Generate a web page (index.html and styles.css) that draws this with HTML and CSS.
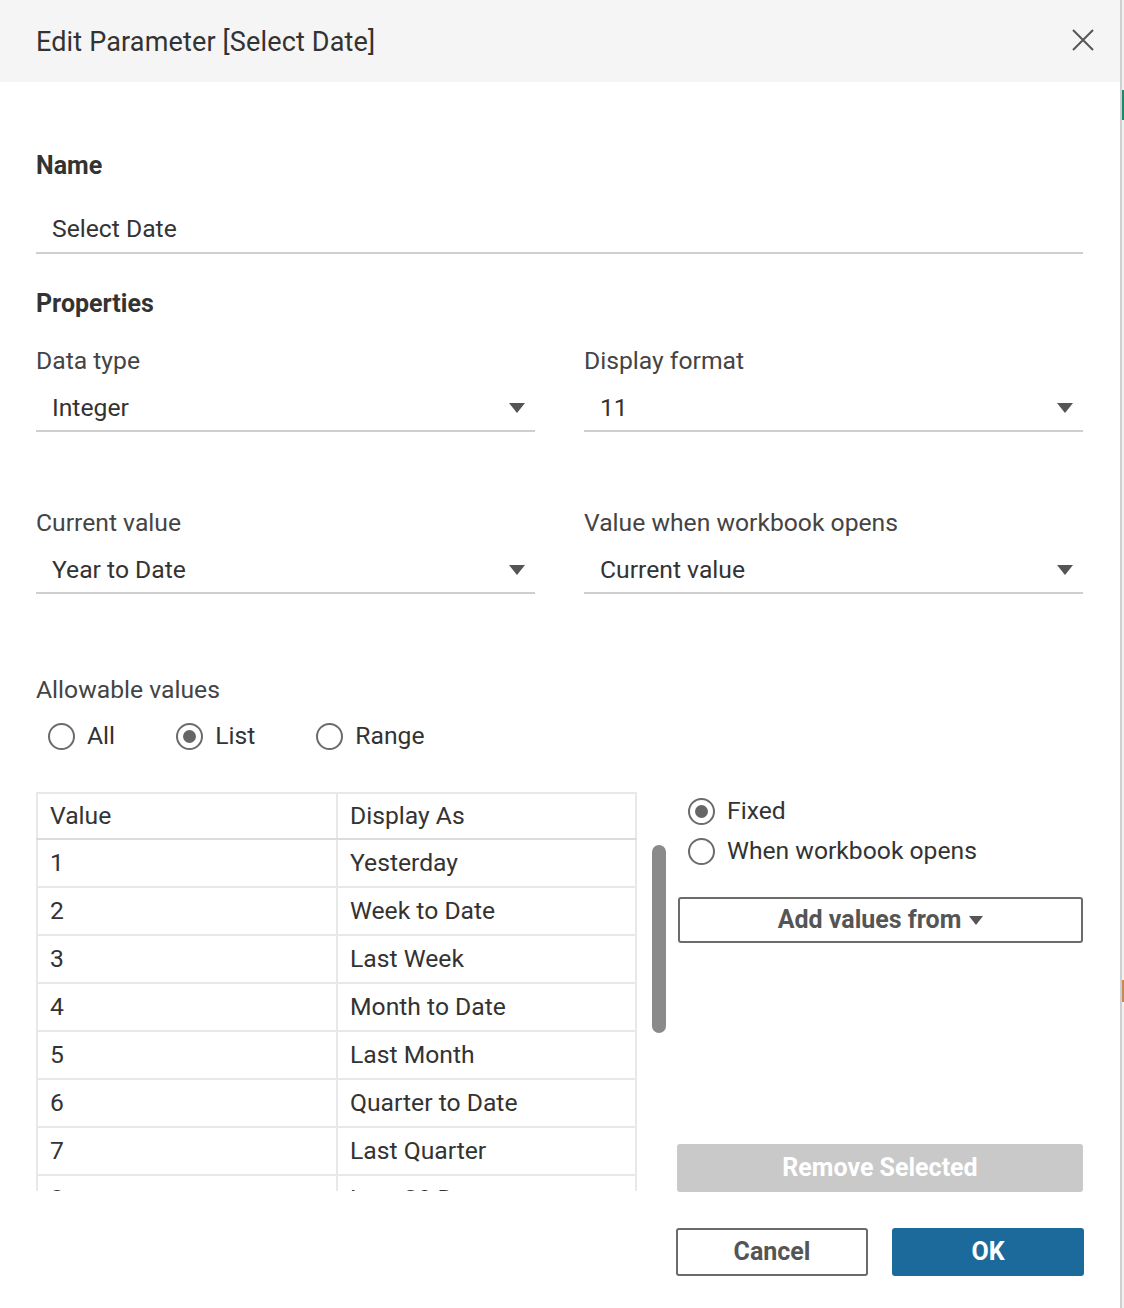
FILE: index.html
```html
<!DOCTYPE html>
<html>
<head>
<meta charset="utf-8">
<title>Edit Parameter</title>
<link rel="stylesheet" href="styles.css">
</head>
<body>
<div class="page">
  <div class="dialog">
    <div class="header">
      <div class="title">Edit Parameter [Select Date]</div>
      <svg class="close" width="22" height="22" viewBox="0 0 22 22"><path d="M1 1 L21 21 M21 1 L1 21" stroke="#555" stroke-width="2" fill="none"/></svg>
    </div>
    <div class="content">
      <div class="section-label name-label">Name</div>
      <div class="text-input">Select Date</div>

      <div class="section-label props-label">Properties</div>

      <div class="field-row row1">
        <div class="field">
          <div class="field-label">Data type</div>
          <div class="select"><span>Integer</span><span class="caret"></span></div>
        </div>
        <div class="field">
          <div class="field-label">Display format</div>
          <div class="select"><span>11</span><span class="caret"></span></div>
        </div>
      </div>

      <div class="field-row row2">
        <div class="field">
          <div class="field-label">Current value</div>
          <div class="select"><span>Year to Date</span><span class="caret"></span></div>
        </div>
        <div class="field">
          <div class="field-label">Value when workbook opens</div>
          <div class="select"><span>Current value</span><span class="caret"></span></div>
        </div>
      </div>

      <div class="field-label allow-label">Allowable values</div>
      <div class="radio-row">
        <div class="radio"><span class="dot"></span><span>All</span></div>
        <div class="radio"><span class="dot on"></span><span>List</span></div>
        <div class="radio"><span class="dot"></span><span>Range</span></div>
      </div>

      <div class="lower">
        <div class="table-wrap">
          <table class="values">
            <tr class="head"><td class="c1">Value</td><td>Display As</td></tr>
            <tr><td class="c1">1</td><td>Yesterday</td></tr>
            <tr><td class="c1">2</td><td>Week to Date</td></tr>
            <tr><td class="c1">3</td><td>Last Week</td></tr>
            <tr><td class="c1">4</td><td>Month to Date</td></tr>
            <tr><td class="c1">5</td><td>Last Month</td></tr>
            <tr><td class="c1">6</td><td>Quarter to Date</td></tr>
            <tr><td class="c1">7</td><td>Last Quarter</td></tr>
            <tr><td class="c1">8</td><td>Last 30 Days</td></tr>
          </table>
        </div>
        <div class="scroll-track"><div class="scroll-thumb"></div></div>
        <div class="side">
          <div class="radio side-radio"><span class="dot on"></span><span>Fixed</span></div>
          <div class="radio side-radio"><span class="dot"></span><span>When workbook opens</span></div>
          <div class="btn outline add-btn">Add values from <span class="caret small"></span></div>
          <div class="btn disabled remove-btn">Remove Selected</div>
        </div>
      </div>

      <div class="footer">
        <div class="btn outline foot-btn">Cancel</div>
        <div class="btn primary foot-btn">OK</div>
      </div>
    </div>
  </div>
  <div class="sliver">
    <div class="mark green"></div>
    <div class="mark orange"></div>
  </div>
</div>
</body>
</html>
```

FILE: styles.css
```css
* { box-sizing: border-box; }
html, body { margin: 0; padding: 0; }
body {
  font-family: Roboto, "Liberation Sans", sans-serif;
  color: #333;
  background: #fff;
}
.page {
  display: flex;
  height: 1308px;
  overflow: hidden;
}
.dialog {
  width: 1122px;
  flex: none;
  border-right: 2px solid #cfcfcf;
  background: #fff;
}
.header {
  height: 82px;
  background: #f5f5f5;
  display: flex;
  align-items: center;
  justify-content: space-between;
  padding: 0 26px 0 36px;
}
.title {
  font-size: 27px;
  line-height: 30px;
  font-weight: 400;
  color: #333;
  letter-spacing: 0.15px;
  margin-top: 2px;
}
.close { display: block; margin-top: -2px; }

.content {
  padding: 0 37px 0 36px;
  font-size: 24.7px;
  line-height: 28px;
}
.section-label {
  font-weight: 700;
  font-size: 25px;
  color: #333;
}
.name-label { margin-top: 70px; }
.text-input {
  margin-top: 35px;
  padding: 0 0 9px 16px;
  border-bottom: 2px solid #cfcfcf;
  color: #333;
}
.props-label { margin-top: 36px; }

.field-row {
  display: grid;
  grid-template-columns: 499px 499px;
  column-gap: 49px;
}
.row1 { margin-top: 29px; }
.row2 { margin-top: 77px; }
.field-label { color: #444; }
.select {
  margin-top: 19px;
  display: flex;
  justify-content: space-between;
  align-items: center;
  padding: 0 10px 8px 16px;
  border-bottom: 2px solid #cfcfcf;
}
.caret {
  width: 0; height: 0;
  border-left: 8px solid transparent;
  border-right: 8px solid transparent;
  border-top: 10px solid #555;
  display: inline-block;
}
.caret.small {
  border-left-width: 7px;
  border-right-width: 7px;
  border-top-width: 9px;
  margin-left: 8px;
  vertical-align: 3px;
}

.allow-label { margin-top: 82px; }
.radio-row {
  margin-top: 18px;
  display: flex;
  gap: 61px;
  padding-left: 12px;
}
.radio {
  display: flex;
  align-items: center;
  gap: 12px;
  height: 28px;
}
.dot {
  width: 27px; height: 27px;
  border: 2px solid #6b6b6b;
  border-radius: 50%;
  display: flex;
  align-items: center;
  justify-content: center;
  flex: none;
}
.dot.on::after {
  content: "";
  width: 13px; height: 13px;
  border-radius: 50%;
  background: #666;
}

.lower {
  margin-top: 42px;
  display: flex;
  height: 400px;
}
.table-wrap {
  width: 601px;
  height: 399px;
  overflow: hidden;
  flex: none;
}
.values {
  width: 601px;
  border-collapse: collapse;
  border: 2px solid #e8e8e8;
}
.values td {
  border: 2px solid #e8e8e8;
  height: 48px;
  padding: 0 12px;
  vertical-align: middle;
  color: #333;
}
.values td.c1 { width: 300px; }
.values .head td { height: 46px; border-bottom-color: #dcdcdc; }
.scroll-track {
  width: 40px;
  flex: none;
  padding: 53px 0 0 15px;
}
.scroll-thumb {
  width: 14px;
  height: 188px;
  background: #8a8a8a;
  border-radius: 7px;
}
.side {
  flex: 1;
  display: flex;
  flex-direction: column;
  padding-top: 5px;
}
.side-radio { margin-left: 11px; margin-bottom: 12px; }
.btn {
  display: flex;
  align-items: center;
  justify-content: center;
  font-weight: 700;
  font-size: 25px;
  border-radius: 3px;
}
.outline {
  border: 2px solid #6b6b6b;
  color: #555;
  background: #fff;
}
.add-btn {
  height: 46px;
  margin-top: 20px;
  margin-left: 1px;
}
.remove-btn {
  margin-top: auto;
  height: 48px;
  background: #c9c9c9;
  color: #fff;
}
.footer {
  margin-top: 36px;
  display: flex;
  justify-content: flex-end;
  gap: 24px;
  margin-right: -1px;
}
.foot-btn { width: 192px; height: 48px; }
.primary { background: #1c6a9c; color: #fff; }

.sliver {
  flex: 1;
  background: #f2f2f2;
  display: flex;
  flex-direction: column;
}
.mark { width: 100%; }
.green { margin-top: 90px; height: 30px; background: #1a8a68; }
.orange { margin-top: 860px; height: 22px; background: #c98a52; }
```
